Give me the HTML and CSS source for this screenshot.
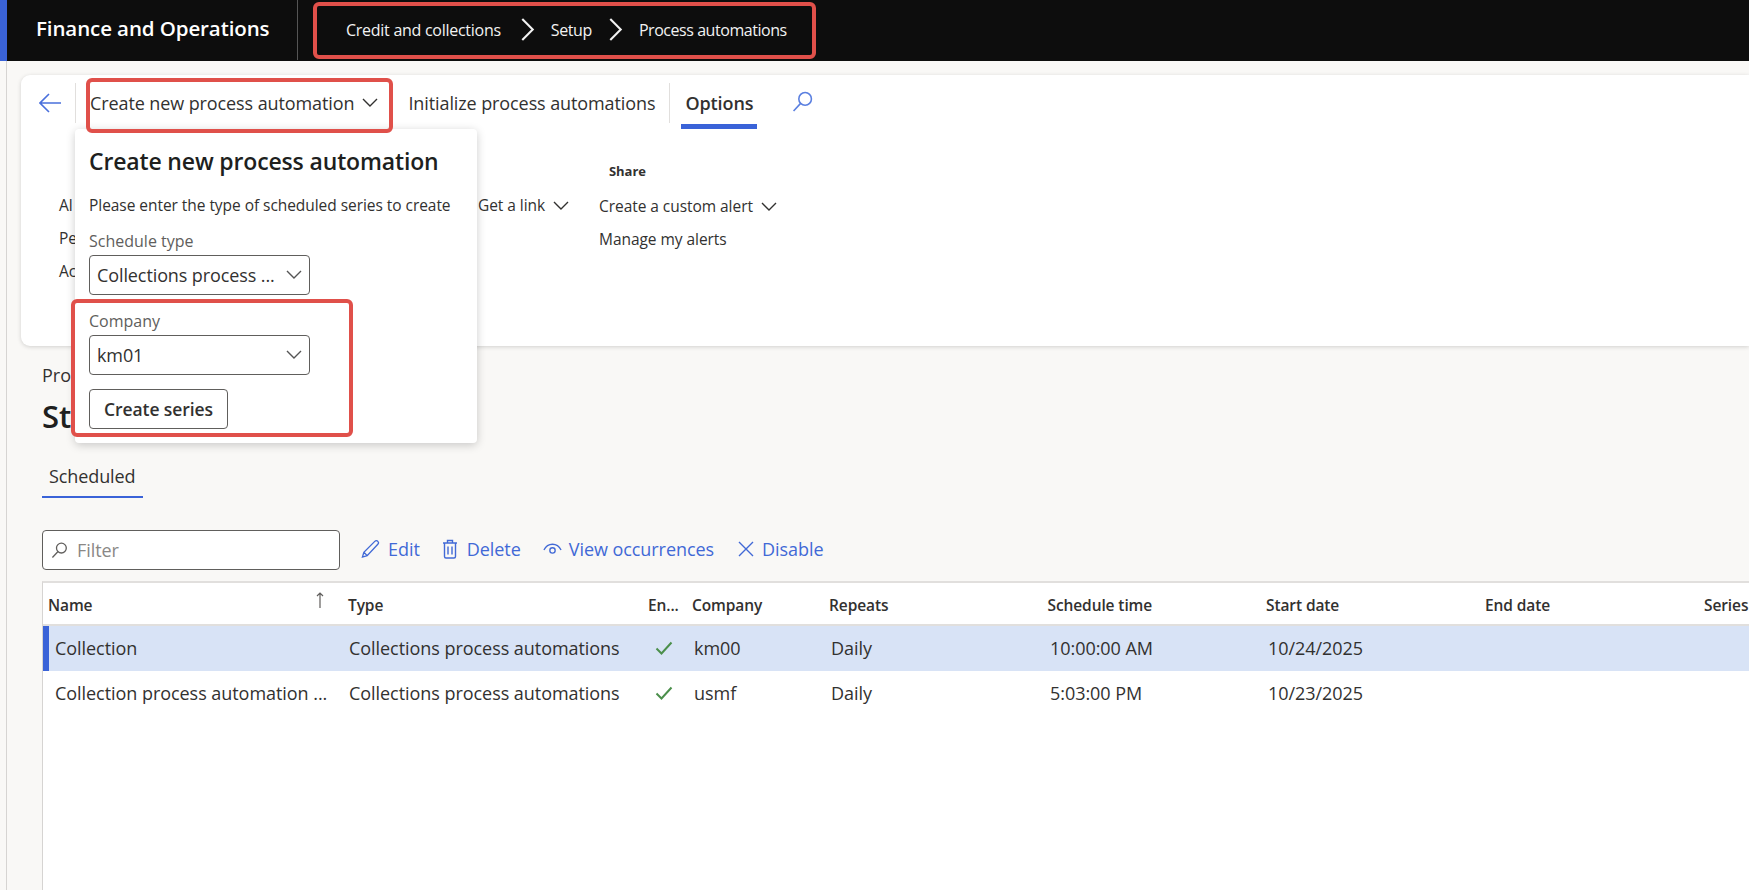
FILE: index.html
```html
<!DOCTYPE html>
<html lang="en">
<head>
<meta charset="utf-8">
<title>Process automations</title>
<link rel="stylesheet" href="styles.css">
</head>
<body>
<header class="topbar">
  <div class="brand">Finance and Operations</div>
  <nav class="crumbs">
    <span class="crumb-a">Credit and collections</span>
    <svg class="crumb-sep" viewBox="0 0 14 22"><path d="M2 1l10 10L2 21"/></svg>
    <span class="crumb-b">Setup</span>
    <svg class="crumb-sep" viewBox="0 0 14 22"><path d="M2 1l10 10L2 21"/></svg>
    <span class="crumb-c">Process automations</span>
  </nav>
  <div class="mark mark-crumbs"></div>
</header>
<main class="page">
  <section class="ribbon">
    <div class="tabs">
      <svg class="back" viewBox="0 0 22 20"><path d="M10 1L1 10l9 9M1 10h21"/></svg>
      <div class="tab-div"></div>
      <div class="tab tab-create">Create new process automation<svg class="chev-s" viewBox="0 0 16 10"><path d="M1 1l7 7 7-7"/></svg></div>
      <div class="tab tab-init">Initialize process automations</div>
      <div class="tab-div"></div>
      <div class="tab tab-opt">Options</div>
      <svg class="tab-search" viewBox="0 0 20 20"><circle cx="12.5" cy="7.500" r="6"/><path d="M8.200 11.800L1.500 19"/></svg>
    </div>
    <div class="groups">
      <div class="group group-a">
        <div>Al</div><div>Pe</div><div>Ac</div>
      </div>
      <div class="group group-link">
        <div>Get a link<svg class="chev-s" viewBox="0 0 16 10"><path d="M1 1l7 7 7-7"/></svg></div>
      </div>
      <div class="group group-share">
        <div class="group-title">Share</div>
        <div>Create a custom alert<svg class="chev-s" viewBox="0 0 16 10"><path d="M1 1l7 7 7-7"/></svg></div>
        <div class="group-last">Manage my alerts</div>
      </div>
    </div>
    <div class="mark mark-create"></div>
  </section>

  <div class="popup">
    <h2 class="popup-title">Create new process automation</h2>
    <p class="popup-text">Please enter the type of scheduled series to create</p>
    <label class="field-label">Schedule type</label>
    <div class="select"><span>Collections process ...</span><svg class="chev-m" viewBox="0 0 16 10"><path d="M1 1l7 7 7-7"/></svg></div>
    <label class="field-label field-company">Company</label>
    <div class="select"><span>km01</span><svg class="chev-m" viewBox="0 0 16 10"><path d="M1 1l7 7 7-7"/></svg></div>
    <button class="btn">Create series</button>
    <div class="mark mark-company"></div>
  </div>

  <section class="content">
    <div class="crumb-page">Pro</div>
    <h1 class="page-title">St</h1>
    <div class="pivot"><span class="pivot-item">Scheduled</span></div>
    <div class="toolbar">
      <div class="filter">
        <svg class="filter-icon" viewBox="0 0 18 18"><circle cx="11" cy="7" r="5.200"/><path d="M7.200 10.800L1.500 17"/></svg>
        <span>Filter</span>
      </div>
      <div class="action">
        <svg class="act-icon" viewBox="0 0 20 20"><path d="M1.500 18.500l1.500-5L14.500 2c1-1 2.400-1 3.200 0 .8.8.8 2.200 0 3L6.500 17zM3 13.500L6.500 17"/></svg>Edit
      </div>
      <div class="action act-del">
        <svg class="act-icon act-trash" viewBox="0 0 16 20"><path d="M1 4h14M5.500 4V1.500h5V4M2.500 4v13.500a1.500 1.500 0 0 0 1.500 1.500h8a1.500 1.500 0 0 0 1.500-1.500V4M6 7.500v8M10 7.500v8"/></svg>Delete
      </div>
      <div class="action act-view">
        <svg class="act-icon act-eye" viewBox="0 0 20 14"><path d="M1 8c2-4 5-6 9-6s7 2 9 6"/><circle cx="10" cy="8.500" r="2.800"/></svg>View occurrences
      </div>
      <div class="action act-dis">
        <svg class="act-icon act-x" viewBox="0 0 16 16"><path d="M1 1l14 14M15 1L1 15"/></svg>Disable
      </div>
    </div>
    <div class="grid">
      <div class="row head">
        <div class="name-head">Name<svg class="sort" viewBox="0 0 10 16"><path d="M5 16V1M2 4l3-3 3 3"/></svg></div>
        <div>Type</div><div>En...</div><div>Company</div><div>Repeats</div><div>Schedule time</div><div>Start date</div><div>End date</div><div>Series</div>
      </div>
      <div class="row item selected">
        <div>Collection</div><div>Collections process automations</div>
        <div><svg class="check" viewBox="0 0 18 14"><path d="M1.500 7.500l5 5L16.500 1.500"/></svg></div>
        <div>km00</div><div>Daily</div><div>10:00:00 AM</div><div>10/24/2025</div><div></div><div></div>
      </div>
      <div class="row item">
        <div>Collection process automation ...</div><div>Collections process automations</div>
        <div><svg class="check" viewBox="0 0 18 14"><path d="M1.500 7.500l5 5L16.500 1.500"/></svg></div>
        <div>usmf</div><div>Daily</div><div>5:03:00 PM</div><div>10/23/2025</div><div></div><div></div>
      </div>
    </div>
  </section>
</main>
</body>
</html>
```
FILE: styles.css
```css
* { box-sizing: border-box; }
html, body { margin: 0; height: 100%; overflow: hidden; }
body {
  background: #f9f8f6;
  color: #323130;
  font-family: "Open Sans", "Noto Sans", sans-serif;
  font-size: 18px;
  display: flex;
  flex-direction: column;
}
svg { fill: none; stroke: currentColor; stroke-width: 1.4; flex: none; }

.topbar {
  position: relative;
  height: 61px;
  flex: none;
  background: #0d0d0d;
  border-left: 7px solid #3a63d8;
  color: #fff;
  display: flex;
  align-items: center;
}
.brand {
  width: 291px;
  height: 60px;
  padding-left: 29px;
  border-right: 1px solid #555;
  font-size: 20.500px;
  font-weight: 600;
  letter-spacing: -0.1px;
  line-height: 57px;
  align-self: flex-start;
}
.crumbs {
  display: flex;
  align-items: center;
  padding-left: 48px;
  margin-top: -2px;
  font-size: 16px;
  letter-spacing: -0.27px;
  color: #f2f2f2;
}
.crumb-sep { width: 15px; height: 23px; margin: 0 16px 0 19px; stroke-width: 2; }
.crumb-b { margin-right: -3px; letter-spacing: -0.4px; }
.crumb-c { letter-spacing: -0.45px; }

.mark {
  position: absolute;
  border: 4px solid #e0504a;
  border-radius: 6px;
  pointer-events: none;
  z-index: 3;
}
.mark-crumbs { left: 306px; top: 2px; width: 503px; height: 57px; }
.mark-create { left: 65px; top: 3px; width: 307px; height: 55px; }
.mark-company { left: -4px; top: 170px; width: 282px; height: 138px; }

.page {
  position: relative;
  flex: 1;
  min-height: 0;
  margin-left: 6px;
  border-left: 1px solid #d6d4d2;
  padding-top: 14px;
  display: flex;
  flex-direction: column;
}
.ribbon {
  position: relative;
  margin-left: 14px;
  height: 271px;
  flex: none;
  background: #fff;
  border-radius: 9px 0 0 9px;
  box-shadow: 0 1px 4px rgba(0,0,0,.16);
}
.tabs {
  display: flex;
  align-items: center;
  height: 56px;
  padding-left: 18px;
}
.back { width: 22px; height: 20px; color: #4a70dc; stroke-width: 1.6; }
.tab-div { width: 1px; height: 40px; background: #e1dfdd; margin-left: 14px; }
.tab { white-space: nowrap; display: flex; align-items: center; letter-spacing: -0.1px; }
.tab-create { margin-left: 14px; }
.chev-s { width: 16px; height: 10px; margin-left: 8px; }
.tab-init { margin-left: 30px; }
.tab-opt {
  position: relative;
  margin-left: 15px;
  font-weight: 600;
}
.tab-opt::after {
  content: "";
  position: absolute;
  left: -4px; right: -4px;
  top: 33px;
  height: 5px;
  background: #3a63d8;
}
.tab-search { width: 21px; height: 21px; color: #5a7fe0; margin-left: 39px; margin-top: -4px; stroke-width: 1.5; }

.groups { display: flex; margin-top: 4px; font-size: 15.500px; letter-spacing: -0.05px; }
.group > div { height: 33px; line-height: 33px; white-space: nowrap; display: flex; align-items: center; }
.group-a { margin-left: 38px; padding-top: 54px; width: 120px; }
.group-link { margin-left: 299px; padding-top: 54px; width: 121px; }
.group-share { padding-top: 17px; }
.group-share > .group-title { height: 38px; font-size: 13px; font-weight: 700; margin-left: 10px; }
.group-share > .group-last { height: 32px; }

.popup {
  position: absolute;
  left: 68px;
  top: 68px;
  width: 402px;
  height: 314px;
  padding: 16px 14px 0;
  background: #fff;
  border-radius: 4px;
  box-shadow: 0 2px 10px rgba(0,0,0,.2);
  z-index: 2;
}
.popup-title { margin: 0; font-size: 23px; font-weight: 600; line-height: 32px; color: #201f1e; letter-spacing: -0.15px; white-space: nowrap; }
.popup-text { margin: 17px 0 0; font-size: 15.500px; line-height: 22px; letter-spacing: -0.05px; white-space: nowrap; }
.field-label { display: block; margin-top: 14px; font-size: 16px; line-height: 22px; color: #605e5c; }
.field-company { margin-top: 15px; }
.select {
  width: 221px;
  height: 40px;
  margin-top: 3px;
  padding: 0 7px;
  border: 1px solid #605e5c;
  border-radius: 4px;
  display: flex;
  align-items: center;
  justify-content: space-between;
  font-size: 18px;
  letter-spacing: -0.1px;
  white-space: nowrap;
}
.chev-m { width: 16px; height: 10px; color: #555; }
.btn {
  display: block;
  width: 139px;
  height: 40px;
  margin-top: 14px;
  padding: 0;
  background: #fff;
  border: 1px solid #605e5c;
  border-radius: 4px;
  color: #323130;
  font-family: inherit;
  font-size: 17.500px;
  font-weight: 600;
  letter-spacing: -0.1px;
}

.content { padding-left: 35px; flex: 1; min-height: 0; display: flex; flex-direction: column; }
.crumb-page { margin-top: 17px; line-height: 24px; }
.page-title { margin: 8px 0 0; font-size: 31px; font-weight: 600; line-height: 42px; color: #201f1e; }
.pivot { margin-top: 21px; }
.pivot-item {
  display: inline-block;
  width: 101px;
  height: 40px;
  padding-left: 7px;
  border-bottom: 2px solid #3a63d8;
  line-height: 36px;
  letter-spacing: -0.1px;
}
.toolbar { display: flex; align-items: center; margin-top: 32px; color: #4169d6; letter-spacing: -0.06px; }
.filter {
  width: 298px;
  height: 40px;
  padding-left: 8px;
  background: #fff;
  border: 1px solid #605e5c;
  border-radius: 4px;
  display: flex;
  align-items: center;
  gap: 9px;
  color: #8a8886;
}
.filter-icon { width: 17px; height: 18px; color: #605e5c; }
.action { display: flex; align-items: center; white-space: nowrap; margin-top: -3px; }
.act-icon { width: 19px; height: 20px; margin-right: 8px; }
.filter + .action { margin-left: 21px; }
.act-del { margin-left: 22px; }
.act-trash { width: 16px; margin-right: 9px; }
.act-view { margin-left: 22px; }
.act-eye { height: 14px; margin-right: 7px; }
.act-dis { margin-left: 24px; }
.act-x { width: 16px; height: 16px; margin-right: 8px; }

.grid {
  flex: 1;
  margin-top: 11px;
  background: #fff;
  border-top: 2px solid #e1dfdd;
  border-left: 1px solid #d6d4d2;
  overflow: hidden;
}
.row {
  display: grid;
  grid-template-columns: 300px 300px 44px 137px 218.500px 218.500px 219px 219px 45px;
  padding-left: 5px;
  white-space: nowrap;
  align-items: center;
}
.head {
  height: 43px;
  border-bottom: 2px solid #e1dfdd;
  font-size: 15.500px;
  font-weight: 600;
  letter-spacing: -0.1px;
  padding-top: 2px;
}
.name-head { position: relative; }
.sort { position: absolute; left: 267px; top: -2px; width: 10px; height: 16px; color: #605e5c; stroke-width: 1.2; }
.item {
  height: 45px;
  padding-left: 12px;
  padding-bottom: 1px;
  letter-spacing: -0.05px;
  grid-template-columns: 294px 300px 45px 137px 219px 218px 219px 219px 45px;
}
.selected { background: #d8e3f6; box-shadow: inset 6px 0 0 #3a63d8; }
.check { width: 18px; height: 14px; margin-left: 6px; color: #4b8f4b; stroke-width: 2; display: block; }
```
